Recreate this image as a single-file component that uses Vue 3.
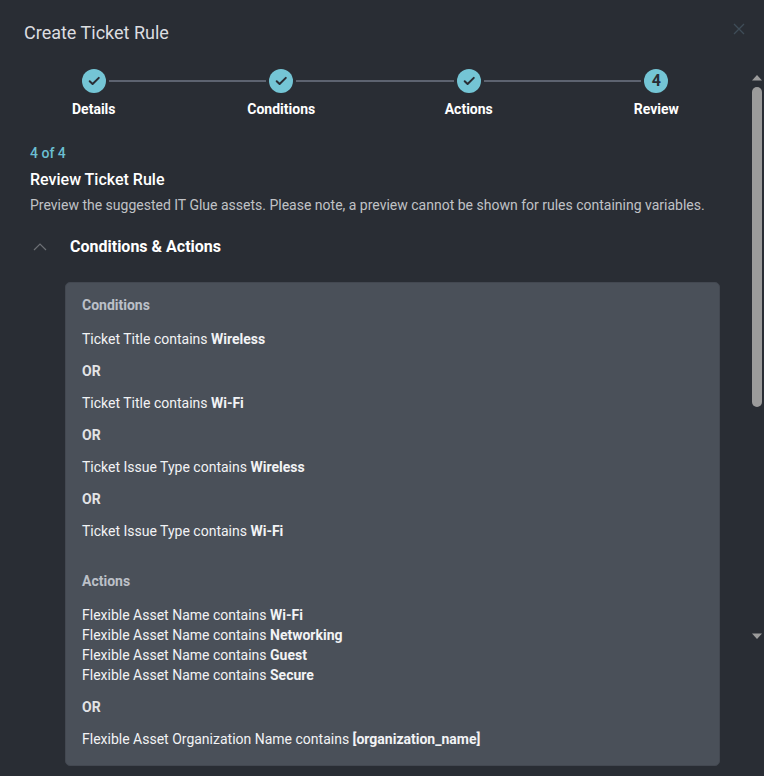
<script setup>
const steps = [
  { label: 'Details', done: true },
  { label: 'Conditions', done: true },
  { label: 'Actions', done: true },
  { label: 'Review', done: false },
]

const sections = [
  {
    title: 'Conditions',
    groups: [
      [{ field: 'Ticket Title', value: 'Wireless' }],
      [{ field: 'Ticket Title', value: 'Wi-Fi' }],
      [{ field: 'Ticket Issue Type', value: 'Wireless' }],
      [{ field: 'Ticket Issue Type', value: 'Wi-Fi' }],
    ],
  },
  {
    title: 'Actions',
    groups: [
      [
        { field: 'Flexible Asset Name', value: 'Wi-Fi' },
        { field: 'Flexible Asset Name', value: 'Networking' },
        { field: 'Flexible Asset Name', value: 'Guest' },
        { field: 'Flexible Asset Name', value: 'Secure' },
      ],
      [{ field: 'Flexible Asset Organization Name', value: '[organization_name]' }],
    ],
  },
]
</script>

<template>
  <main class="dialog">
    <header class="header">
      <h1>Create Ticket Rule</h1>
      <button class="close" type="button" aria-label="Close">
        <svg width="12" height="12" viewBox="0 0 12 12" fill="none" stroke="currentColor" stroke-width="1.3">
          <path d="M1 1L11 11M11 1L1 11" />
        </svg>
      </button>
    </header>

    <div class="body">
      <div class="content">
        <ol class="steps">
          <li v-for="(step, i) in steps" :key="step.label" class="step">
            <div class="track">
              <span class="line" :class="{ hidden: i === 0 }"></span>
              <span class="dot">
                <svg v-if="step.done" width="24" height="24" viewBox="0 0 24 24" fill="none" stroke="currentColor" stroke-width="2" stroke-linecap="round" stroke-linejoin="round">
                  <path d="M7.7 12.2L10.6 15L16.8 8.9" />
                </svg>
                <template v-else>{{ i + 1 }}</template>
              </span>
              <span class="line" :class="{ hidden: i === steps.length - 1 }"></span>
            </div>
            <span class="label">{{ step.label }}</span>
          </li>
        </ol>

        <section class="intro">
          <p class="count">4 of 4</p>
          <h2>Review Ticket Rule</h2>
          <p class="note">Preview the suggested IT Glue assets. Please note, a preview cannot be shown for rules containing variables.</p>
        </section>

        <button class="toggle" type="button" aria-expanded="true">
          <svg width="20" height="20" viewBox="0 0 20 20" fill="none" stroke="currentColor" stroke-width="1.2">
            <path d="M4 13L10 7L16 13" />
          </svg>
          <span>Conditions &amp; Actions</span>
        </button>

        <div class="panel">
          <section v-for="section in sections" :key="section.title" class="rules">
            <h3>{{ section.title }}</h3>
            <div class="groups">
              <template v-for="(group, g) in section.groups" :key="g">
                <p v-if="g > 0" class="or">OR</p>
                <div>
                  <p v-for="rule in group" :key="rule.value">{{ rule.field }} contains <b>{{ rule.value }}</b></p>
                </div>
              </template>
            </div>
          </section>
        </div>
      </div>

      <div class="scrollbar" aria-hidden="true">
        <svg width="10" height="6" viewBox="0 0 10 6"><path d="M0 5.5L5 0L10 5.5Z" fill="currentColor" /></svg>
        <span class="thumb"></span>
        <span class="rest"></span>
        <svg width="10" height="6" viewBox="0 0 10 6"><path d="M0 0.5L5 6L10 0.5Z" fill="currentColor" /></svg>
      </div>
    </div>
  </main>
</template>

<style>
body {
  background: #292d34;
}
</style>

<style scoped>
.dialog {
  box-sizing: border-box;
  min-height: 100vh;
  background: #292d34;
  color: #f2f3f5;
  font: 14px/20px Roboto, "Liberation Sans", sans-serif;
}

h1, h2, h3, p, ol {
  margin: 0;
  padding: 0;
}

button {
  padding: 0;
  border: 0;
  background: none;
  font: inherit;
}

svg {
  display: block;
}

.header {
  display: flex;
  justify-content: space-between;
  align-items: flex-start;
  padding: 20px 19px 20px 24px;
}

h1 {
  color: #dcdde0;
  font-size: 18px;
  font-weight: 400;
  line-height: 25px;
}

.close {
  padding: 3px 0;
  color: #3f4c57;
}

.body {
  display: grid;
  grid-template-columns: minmax(0, 1fr) 14px;
}

.steps {
  display: flex;
  list-style: none;
  padding-top: 4px;
}

.step {
  flex: 1;
  display: flex;
  flex-direction: column;
  align-items: center;
  gap: 6px;
}

.track {
  display: flex;
  align-items: center;
  align-self: stretch;
  gap: 3px;
}

.line {
  flex: 1;
  height: 2px;
  background: #5d6370;
}

.line.hidden {
  visibility: hidden;
}

.dot {
  width: 24px;
  height: 24px;
  border-radius: 50%;
  background: #74c5d5;
  color: #292d34;
  font-size: 16px;
  font-weight: 700;
  line-height: 24px;
  text-align: center;
}

.label {
  color: #fff;
  font-weight: 700;
}

.intro {
  padding: 24px 30px 0;
}

.count {
  color: #6bbfd2;
  font-weight: 500;
}

h2 {
  padding: 5px 0 3px;
  color: #fff;
  font-size: 16px;
  font-weight: 500;
  line-height: 24px;
}

.note {
  color: #c0c2c6;
}

.toggle {
  display: flex;
  align-items: center;
  gap: 20px;
  margin: 20px 30px 0;
  color: #fff;
  font-size: 16px;
  font-weight: 700;
  line-height: 24px;
}

.toggle svg {
  color: #6d7075;
}

.panel {
  display: flex;
  flex-direction: column;
  gap: 30px;
  margin: 23px 30px 9px 65px;
  padding: 12px 16px 16px;
  border: 1px solid #434851;
  border-radius: 5px;
  background: #4a5059;
}

h3 {
  margin-bottom: 14px;
  color: #bcc0c8;
  font-size: 14px;
  font-weight: 700;
}

.groups {
  display: flex;
  flex-direction: column;
  gap: 12px;
}

.or {
  color: #e2e3e5;
  font-weight: 700;
}

.scrollbar {
  display: flex;
  flex-direction: column;
  align-items: center;
  gap: 6px;
  height: 564px;
  margin-top: 10px;
  color: #9b9b9b;
}

.thumb {
  flex: 3;
  width: 10px;
  border-radius: 5px;
  background: #9b9b9b;
}

.rest {
  flex: 2;
}
</style>
